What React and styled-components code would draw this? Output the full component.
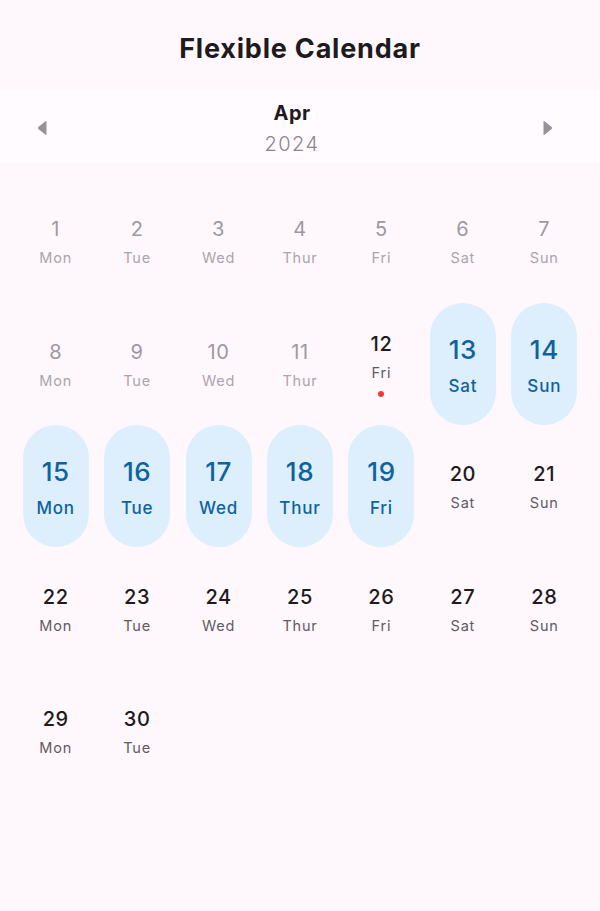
import React from "react";
import styled, { createGlobalStyle } from "styled-components";

const GlobalStyle = createGlobalStyle`
  html, body { margin: 0; padding: 0; background: #fef7fb; }
  body { font-family: Inter, "Noto Sans", sans-serif; }
`;

const Page = styled.div`
  width: 600px;
  min-height: 911px;
  background: #fef7fb;
  display: flex;
  flex-direction: column;
`;

const Title = styled.h1`
  margin: 0;
  height: 90px;
  display: flex;
  align-items: center;
  justify-content: center;
  font-size: 27px;
  font-weight: 700;
  color: #1d1b20;
  letter-spacing: 0.8px;
  padding-top: 6px;
  box-sizing: border-box;
`;

const MonthBar = styled.div`
  height: 73px;
  background: #fffbfe;
  display: flex;
  align-items: center;
  justify-content: space-between;
  padding: 0 46px 0 36px;
`;

const NavButton = styled.button`
  border: 0;
  background: none;
  padding: 0;
  width: 12px;
  height: 18px;
  display: flex;
  align-items: center;
  justify-content: center;
  cursor: pointer;
  margin-top: 2px;
`;

const MonthLabel = styled.div`
  display: flex;
  flex-direction: column;
  align-items: center;
  margin-left: -6px;
  padding-top: 6px;
`;

const MonthName = styled.div`
  font-size: 20px;
  font-weight: 700;
  line-height: 26px;
  color: #1d1b20;
  letter-spacing: 0.4px;
`;

const Year = styled.div`
  font-size: 20px;
  font-weight: 300;
  line-height: 30px;
  margin-top: 3px;
  color: #8a8590;
  letter-spacing: 1.4px;
`;

const Grid = styled.div`
  display: grid;
  grid-template-columns: repeat(7, 1fr);
  grid-auto-rows: 122.5px;
  padding: 17px 15px 0;
`;

const Cell = styled.div`
  display: flex;
  align-items: center;
  justify-content: center;
`;

const Day = styled.div`
  display: flex;
  flex-direction: column;
  align-items: center;
  justify-content: center;
  width: 66px;
  height: 122px;
  border-radius: 33px;
  background: ${(p) => (p.$selected ? "#ddeefc" : "transparent")};
`;

const Num = styled.div`
  font-size: ${(p) => (p.$selected ? "26px" : "20px")};
  line-height: ${(p) => (p.$selected ? "30px" : "24px")};
  font-weight: ${(p) => (p.$disabled ? 400 : 500)};
  color: ${(p) =>
    p.$selected ? "#0e62a0" : p.$disabled ? "#9d99a1" : "#1d1b20"};
  letter-spacing: 0.6px;
  margin-top: ${(p) => (p.$selected ? "3px" : "2px")};
`;

const Label = styled.div`
  margin-top: ${(p) => (p.$selected ? "11px" : "8px")};
  font-size: ${(p) => (p.$selected ? "17px" : "14.5px")};
  line-height: ${(p) => (p.$selected ? "20px" : "18px")};
  font-weight: ${(p) => (p.$selected ? 500 : 400)};
  color: ${(p) =>
    p.$selected ? "#0e62a0" : p.$disabled ? "#aaa5ad" : "#5f5b63"};
  letter-spacing: 0.8px;
`;

const Dot = styled.div`
  margin-top: 9px;
  width: 6px;
  height: 6px;
  border-radius: 50%;
  background: #ec3b35;
`;

const Arrow = ({ dir }) => (
  <svg width="10" height="16" viewBox="0 0 10 16">
    {dir === "left" ? (
      <path
        d="M8.5 1.2 Q9.5 0.8 9.5 2 V14 Q9.5 15.2 8.5 14.8 L1.4 9.1 Q0.2 8 1.4 6.9 Z"
        fill="#96929a"
      />
    ) : (
      <path
        d="M1.5 1.2 Q0.5 0.8 0.5 2 V14 Q0.5 15.2 1.5 14.8 L8.6 9.1 Q9.8 8 8.6 6.9 Z"
        fill="#96929a"
      />
    )}
  </svg>
);

const names = ["Mon", "Tue", "Wed", "Thur", "Fri", "Sat", "Sun"];
const days = Array.from({ length: 30 }, (_, i) => i + 1);

export default function App() {
  return (
    <Page>
      <GlobalStyle />
      <Title>Flexible Calendar</Title>
      <MonthBar>
        <NavButton aria-label="previous month">
          <Arrow dir="left" />
        </NavButton>
        <MonthLabel>
          <MonthName>Apr</MonthName>
          <Year>2024</Year>
        </MonthLabel>
        <NavButton aria-label="next month">
          <Arrow dir="right" />
        </NavButton>
      </MonthBar>
      <Grid>
        {days.map((d) => {
          const selected = d >= 13 && d <= 19;
          const disabled = d < 12;
          const today = d === 12;
          return (
            <Cell key={d}>
              <Day $selected={selected}>
                <Num $selected={selected} $disabled={disabled}>
                  {d}
                </Num>
                <Label $selected={selected} $disabled={disabled}>
                  {names[(d - 1) % 7]}
                </Label>
                {today && <Dot />}
              </Day>
            </Cell>
          );
        })}
      </Grid>
    </Page>
  );
}
